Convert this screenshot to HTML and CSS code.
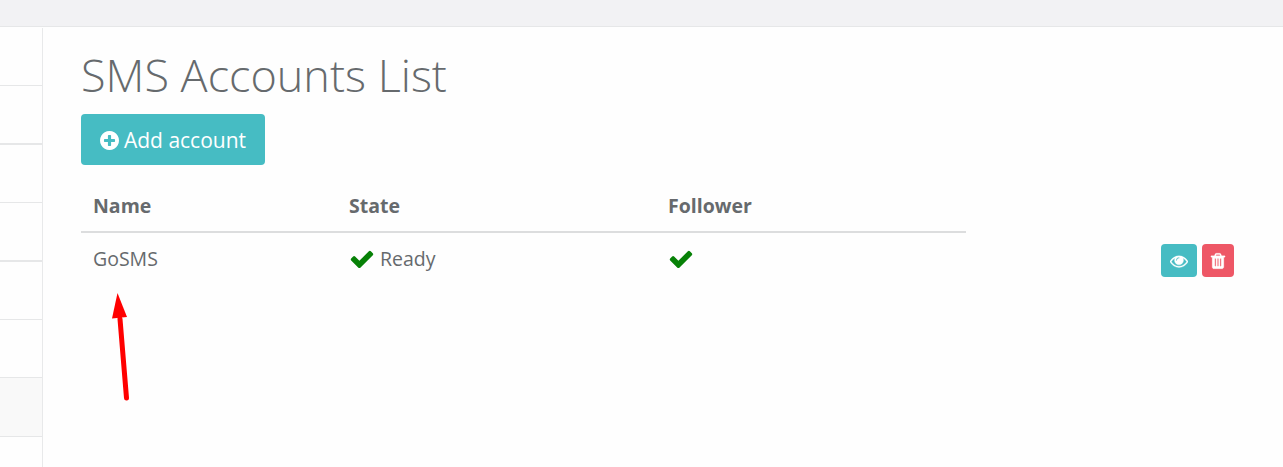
FILE: index.html
```html
<!DOCTYPE html>
<html lang="en">
<head>
    <meta charset="UTF-8">
    <meta name="viewport" content="width=device-width, initial-scale=1.0">
    <title>SMS Accounts List</title>
    <link rel="stylesheet" href="styles.css">
</head>
<body>
    <svg class="sprite" aria-hidden="true">
        <symbol id="icon-check" viewBox="0 0 1792 1792">
            <path d="M1671 566q0 40-28 68l-724 724-136 136q-28 28-68 28t-68-28l-136-136-362-362q-28-28-28-68t28-68l136-136q28-28 68-28t68 28l294 295 656-657q28-28 68-28t68 28l136 136q28 28 28 68z"/>
        </symbol>
    </svg>

    <div class="topbar"></div>

    <div class="layout">
        <div class="sidebar">
            <div class="sidebar-item"></div>
            <div class="sidebar-item thick"></div>
            <div class="sidebar-item"></div>
            <div class="sidebar-item thick"></div>
            <div class="sidebar-item"></div>
            <div class="sidebar-item"></div>
            <div class="sidebar-item active"></div>
        </div>

        <div class="content">
            <h1>SMS Accounts List</h1>

            <button class="btn btn-add">
                <svg class="icon" viewBox="128 128 1536 1536"><path d="M1344 960v-128q0-26-19-45t-45-19h-256v-256q0-26-19-45t-45-19h-128q-26 0-45 19t-19 45v256h-256q-26 0-45 19t-19 45v128q0 26 19 45t45 19h256v256q0 26 19 45t45 19h128q26 0 45-19t19-45v-256h256q26 0 45-19t19-45zm320-64q0 209-103 385.5t-279.5 279.5-385.5 103-385.5-103-279.5-279.5-103-385.5 103-385.5 279.5-279.5 385.5-103 385.5 103 279.5 279.5 103 385.5z"/></svg>
                <span>Add account</span>
            </button>

            <div class="accounts">
                <div class="row head">
                    <div>Name</div>
                    <div>State</div>
                    <div>Follower</div>
                </div>
                <div class="row">
                    <div>GoSMS</div>
                    <div class="state"><svg class="check"><use href="#icon-check"/></svg><span>Ready</span></div>
                    <div class="state"><svg class="check"><use href="#icon-check"/></svg></div>
                    <div class="actions">
                        <button class="btn btn-view" aria-label="View">
                            <svg class="icon" viewBox="0 0 1792 1792"><path d="M1664 960q-152-236-381-353 61 104 61 225 0 185-131.5 316.5t-316.5 131.5-316.5-131.5-131.5-316.5q0-121 61-225-229 117-381 353 133 205 333.500 326.500t434.500 121.500 434.500-121.500 333.500-326.500zm-720-384q0-20-14-34t-34-14q-125 0-214.500 89.500t-89.500 214.500q0 20 14 34t34 14 34-14 14-34q0-86 61-147t147-61q20 0 34-14t14-34zm848 384q0 34-20 69-140 230-376.500 368.500t-499.500 138.500-499.500-139-376.500-368q-20-35-20-69t20-69q140-229 376.500-368t499.500-139 499.500 139 376.500 368q20 35 20 69z"/></svg>
                        </button>
                        <button class="btn btn-delete" aria-label="Delete">
                            <svg class="icon" viewBox="0 0 1792 1792"><path d="M704 1376v-704q0-14-9-23t-23-9h-64q-14 0-23 9t-9 23v704q0 14 9 23t23 9h64q14 0 23-9t9-23zm256 0v-704q0-14-9-23t-23-9h-64q-14 0-23 9t-9 23v704q0 14 9 23t23 9h64q14 0 23-9t9-23zm256 0v-704q0-14-9-23t-23-9h-64q-14 0-23 9t-9 23v704q0 14 9 23t23 9h64q14 0 23-9t9-23zm-544-992h448l-48-117q-7-9-17-11h-317q-10 2-17 11zm928 32v64q0 14-9 23t-23 9h-96v948q0 83-47 143.500t-113 60.500h-832q-66 0-113-58.500t-47-141.500v-952h-96q-14 0-23-9t-9-23v-64q0-14 9-23t23-9h309l70-167q15-37 54-63t79-26h320q40 0 79 26t54 63l70 167h309q14 0 23 9t9 23z"/></svg>
                        </button>
                    </div>
                </div>
            </div>
        </div>
    </div>

    <svg class="pointer" viewBox="0 0 20 110">
        <path d="M10 26L16.500 105" stroke="#f00" stroke-width="5" stroke-linecap="round"/>
        <path d="M7.500 0L17 24L2 25.500Z" fill="#f00"/>
    </svg>
</body>
</html>
```

FILE: styles.css
```css
* {
    margin: 0;
    padding: 0;
    box-sizing: border-box;
}

body {
    height: 100vh;
    display: flex;
    flex-direction: column;
    overflow: hidden;
    background: #fefefe;
    color: #666a6d;
    font-family: "Open Sans", "Noto Sans", sans-serif;
    font-size: 19.5px;
}

.sprite {
    display: none;
}

.topbar {
    flex: none;
    height: 27px;
    background: #f2f2f4;
    border-bottom: 1px solid #e6e7e8;
}

.layout {
    flex: 1;
    display: flex;
}

.sidebar {
    width: 43px;
    margin-top: 1px;
    border-right: 1px solid #e8e9ea;
}

.sidebar-item {
    height: 58px;
    border-bottom: 1px solid #e6e7e8;
}

.sidebar-item.thick {
    height: 59px;
    border-bottom-width: 2px;
}

.sidebar-item.active {
    height: 59px;
    background: #f9f9f9;
}

.content {
    flex: 1;
    padding: 18px 49px 0 38px;
}

h1 {
    height: 69px;
    font-size: 45px;
    font-weight: 300;
    line-height: 60px;
}

.btn {
    display: flex;
    align-items: center;
    justify-content: center;
    border: none;
    border-radius: 4px;
    background: #46bcc3;
    color: #fff;
    font-family: inherit;
    cursor: pointer;
}

.icon {
    width: 18px;
    height: 18px;
    fill: currentColor;
    stroke: currentColor;
    stroke-width: 30;
}

.btn-add {
    width: 184px;
    height: 51px;
    gap: 5px;
    font-size: 21px;
}

.btn-add .icon {
    width: 19px;
    height: 19px;
    margin-top: 1px;
    stroke: none;
}

.accounts {
    margin-top: 15px;
}

.row {
    display: grid;
    grid-template-columns: 256px 319px 1fr auto;
    align-items: start;
    padding: 11px 0 0 12px;
    line-height: 30px;
}

.row.head {
    width: 885px;
    height: 53px;
    border-bottom: 2px solid #dcddde;
    font-weight: 700;
}

.state {
    display: flex;
    align-items: center;
    gap: 5px;
    height: 30px;
}

.check {
    width: 26px;
    height: 26px;
    fill: #078107;
}

.actions {
    display: flex;
    gap: 5px;
}

.btn-view {
    width: 36px;
    height: 33px;
}

.btn-delete {
    width: 32px;
    height: 33px;
    background: #ee5766;
}

/* arrow drawn over the page */
.pointer {
    position: absolute;
    left: 110px;
    top: 293px;
    width: 20px;
    height: 110px;
}
```
